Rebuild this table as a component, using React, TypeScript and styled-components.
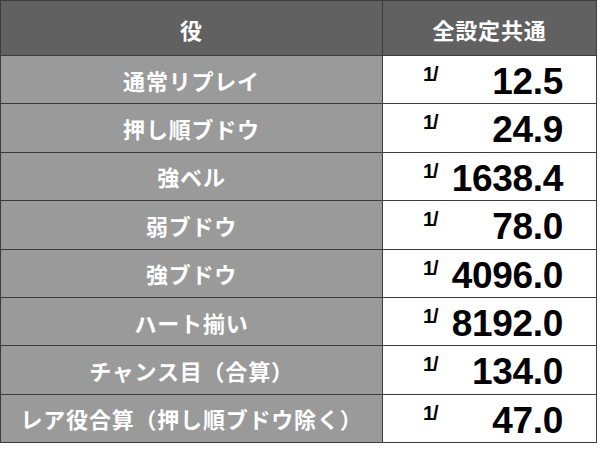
import React from 'react';
import styled, { createGlobalStyle } from 'styled-components';

const GlobalStyle = createGlobalStyle`
  html, body {
    margin: 0;
    padding: 0;
    background: #ffffff;
  }
`;

const Table = styled.div`
  display: grid;
  grid-template-columns: 382px 1fr;
  grid-template-rows: 55px repeat(8, 48.4px);
  width: 597px;
  border-top: 1px solid #3c3c3c;
  border-left: 1px solid #3c3c3c;
  box-sizing: border-box;
  font-family: "Noto Sans CJK JP", "Liberation Sans", sans-serif;
`;

const Cell = styled.div`
  display: flex;
  align-items: center;
  box-sizing: border-box;
  border-right: 1px solid #3c3c3c;
  border-bottom: 1px solid #3c3c3c;
`;

const HeadCell = styled(Cell)`
  justify-content: center;
  background: #616161;
  color: #ffffff;
  font-size: 22px;
  font-weight: 700;
  letter-spacing: 0.8px;
  padding-top: 1px;
`;

const NameCell = styled(Cell)`
  justify-content: center;
  background: #9a9a9a;
  color: #ffffff;
  font-size: 22px;
  font-weight: 700;
  white-space: nowrap;
  letter-spacing: 0.8px;
`;

const ValueCell = styled(Cell)`
  background: #ffffff;
  color: #000000;
  font-family: "Liberation Sans", Arial, sans-serif;
  font-weight: 700;
  padding: 0 33px 0 40px;
  justify-content: space-between;
  align-items: flex-start;
`;

const Fraction = styled.span`
  font-size: 20px;
  line-height: 1;
  margin-top: 8px;
  letter-spacing: -1px;
`;

const Value = styled.span`
  font-size: 37px;
  line-height: 1;
  margin-top: 7px;
  letter-spacing: -0.3px;
`;

const rows: [string, string][] = [
  ['通常リプレイ', '12.5'],
  ['押し順ブドウ', '24.9'],
  ['強ベル', '1638.4'],
  ['弱ブドウ', '78.0'],
  ['強ブドウ', '4096.0'],
  ['ハート揃い', '8192.0'],
  ['チャンス目（合算）', '134.0'],
  ['レア役合算（押し順ブドウ除く）', '47.0'],
];

export default function App() {
  return (
    <>
      <GlobalStyle />
      <Table>
        <HeadCell>役</HeadCell>
        <HeadCell>全設定共通</HeadCell>
        {rows.map(([name, value]) => (
          <React.Fragment key={name}>
            <NameCell>{name}</NameCell>
            <ValueCell>
              <Fraction>1/</Fraction>
              <Value>{value}</Value>
            </ValueCell>
          </React.Fragment>
        ))}
      </Table>
    </>
  );
}
